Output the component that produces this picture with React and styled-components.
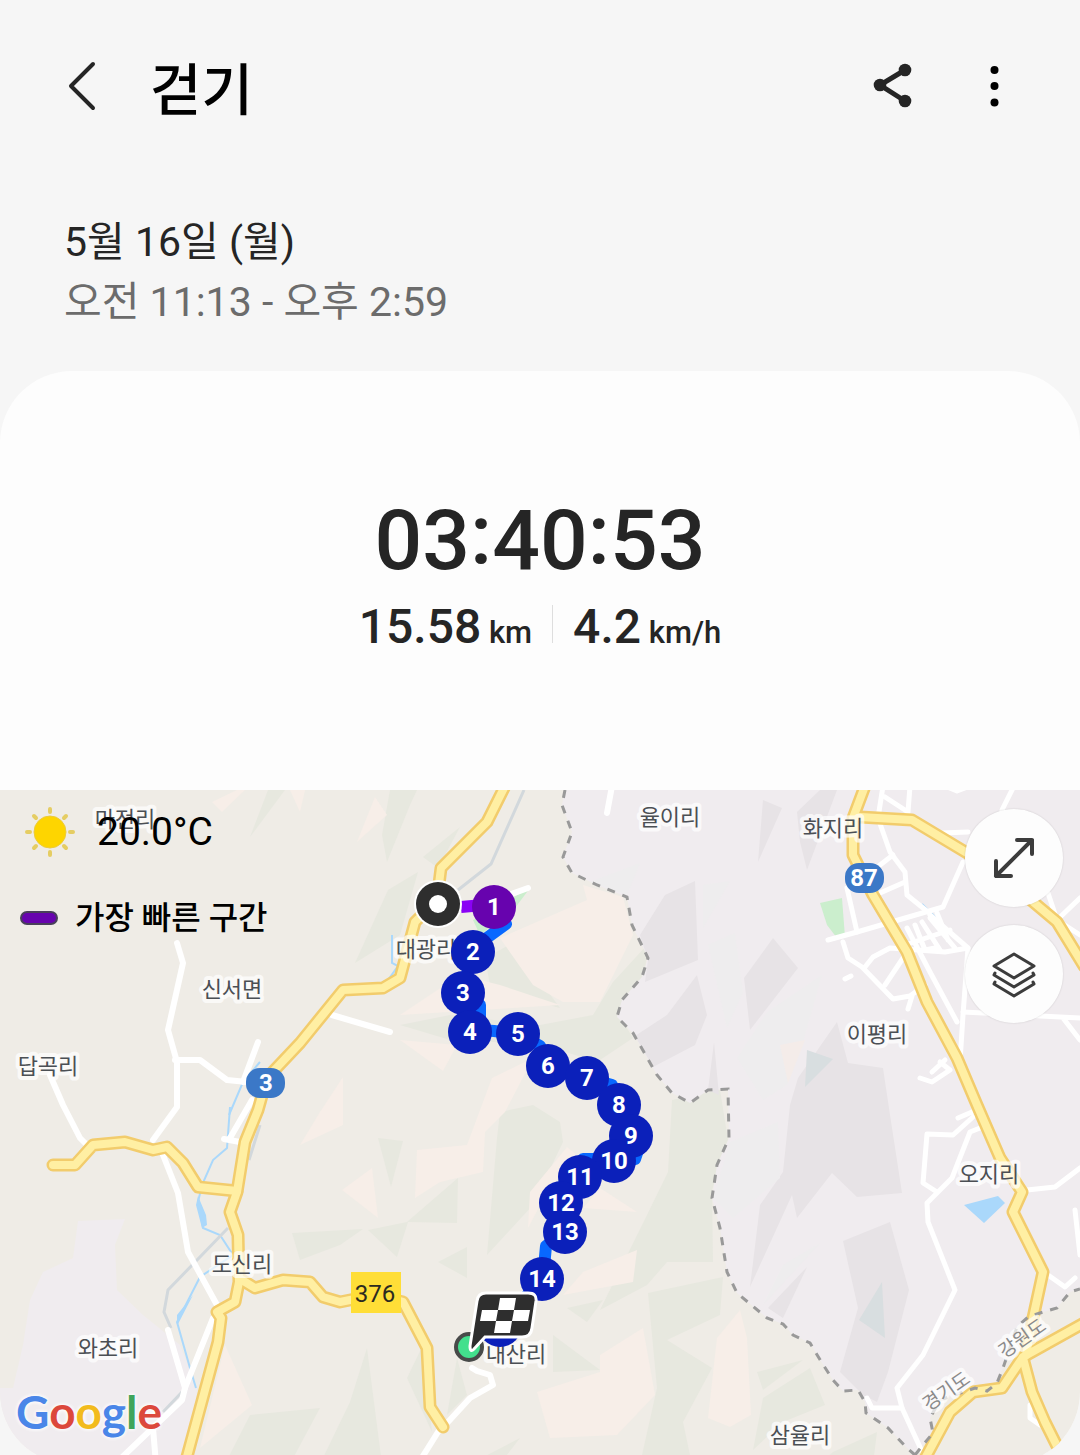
import React from 'react';
import styled, { createGlobalStyle } from 'styled-components';

const places = [
  { name: '마전리', x: 125, y: 827 },
  { name: '신서면', x: 232, y: 997 },
  { name: '답곡리', x: 48, y: 1074 },
  { name: '대광리', x: 426, y: 957 },
  { name: '율이리', x: 670, y: 825 },
  { name: '화지리', x: 833, y: 836 },
  { name: '이평리', x: 877, y: 1042 },
  { name: '오지리', x: 989, y: 1182 },
  { name: '도신리', x: 242, y: 1272 },
  { name: '와초리', x: 108, y: 1356 },
  { name: '내산리', x: 516, y: 1362 },
  { name: '삼율리', x: 800, y: 1443 },
];

const provinces = [
  { name: '강원도', x: 1022, y: 1338 },
  { name: '경기도', x: 946, y: 1391 },
];

const laps = [
  [494, 907], [473, 952], [463, 993], [470, 1032], [518, 1034],
  [548, 1066], [587, 1078], [619, 1105], [631, 1136], [614, 1161],
  [580, 1177], [561, 1203], [565, 1232], [542, 1279],
];

const hills = [
  '390,790 417,790 410,805 387,862 382,835',
  '460,827 438,868 423,857',
  '418,872 388,890 355,963 400,935',
  '485,958 513,943 560,1008 530,1000 490,985',
  '400,1025 450,1015 540,1025 593,1015 613,982 647,945 645,975 617,1012 633,1038 597,1062 553,1048 497,1042 457,1042',
  '378,1138 403,1141 391,1187',
  '292,1233 363,1229 340,1245 300,1260',
  '368,1230 407,1222 458,1178 457,1223 408,1222 397,1257',
  '467,1247 438,1262 467,1278',
  '500,1112 533,1105 560,1122 563,1142 533,1205 487,1255 497,1138',
  '567,1308 603,1300 587,1322',
  '672,1100 720,1090 728,1140 712,1190 713,1262 667,1262 647,1285 600,1310 647,1215 668,1172',
  '648,1293 723,1277 720,1315 667,1340 712,1368 683,1422 690,1455 640,1464 657,1388',
  '553,1335 600,1370 553,1372',
  '367,1348 382,1464 320,1464 350,1402',
  '407,1378 423,1345 432,1432',
  '457,1358 467,1395 447,1415',
  '757,1372 803,1360 763,1390',
  '763,1398 810,1368 825,1405 783,1422 753,1450',
  '833,1452 877,1432 873,1464 820,1464',
  '250,1415 300,1410 320,1408 290,1464 225,1464',
  '268,790 285,790 250,837',
  '520,1438 470,1464 500,1464',
];

const fields = [
  '375,797 387,815 357,842',
  '290,790 305,790 300,812',
  '237,790 245,790 222,812 212,802',
  '460,975 400,1015 480,1010 560,1005 500,985',
  '587,900 500,938 533,985 563,1002 600,1002 633,935 623,897 583,885',
  '400,1040 457,1045 443,1071',
  '343,1077 320,1112 300,1145 343,1125',
  '492,1078 533,1058 505,1112 485,1132 483,1172 440,1182 415,1198 417,1150 467,1145',
  '372,1168 342,1190 378,1218',
  '567,1147 577,1155 547,1192 528,1228 530,1192',
  '600,1188 637,1212 583,1208',
  '583,1272 637,1250 633,1282 563,1295',
  '740,1310 747,1338 751,1415 730,1427 708,1418 717,1338',
  '600,1355 643,1328 655,1395 617,1435 550,1438 537,1392 600,1372',
  '225,1345 252,1405 200,1448',
];

const ridges = [
  '763,800 782,808 758,862',
  '820,790 837,790 807,870 800,842 797,812',
  '695,881 665,895 640,935 648,960 645,982 698,960',
  '773,938 798,968 750,1030 744,978',
  '697,975 707,1015 695,1045 653,1067 635,1036 667,1015',
  '714,1042 719,1095 708,1090',
  '837,1022 848,1063 883,1068 890,1115 902,1193 857,1197 832,1173 797,1218 792,1195 750,1287 760,1205 783,1172 790,1105 798,1078',
  '890,1222 909,1290 888,1372 877,1402 863,1395 840,1372 858,1308 843,1241',
  '807,1267 783,1318 768,1308',
];

const plains = [
  '708,945 735,933 743,992 727,1028',
  '730,881 703,928 703,885',
  '822,975 803,1042 787,1085 763,1100 737,1058 767,1012',
  '778,1122 780,1178 733,1218 713,1198 730,1142',
  '820,1243 763,1305 783,1265',
  '640,863 627,895 590,882',
];

const westBorder =
  '565,790 562,805 572,832 563,857 572,873 597,885 627,897 632,925 648,958 642,977 622,1000 617,1017 633,1033 657,1075 672,1093 690,1103 708,1090 728,1089 729,1138 717,1165 712,1198 720,1228 727,1272 737,1293 767,1318 783,1324 793,1335 810,1343 822,1363 833,1380 843,1391 858,1390 865,1402 866,1413 888,1428 907,1448 915,1455';
const southBorder =
  '915,1455 923,1445 933,1433 930,1418 940,1400 975,1388 987,1391 997,1383 1003,1368 1017,1327 1028,1317 1040,1313 1057,1308 1070,1292 1080,1289';

const lanes = [
  'M177 943L183 963L168 1030L177 1062L177 1107L153 1140',
  'M175 1060H200L227 1080L247 1082',
  'M258 1042L243 1082L263 1075M252 1100L230 1138M224 1139L240 1142',
  'M50 1075L63 1105L80 1138L90 1148',
  'M163 1155L178 1193L188 1252L217 1305',
  'M213 1318L185 1388L182 1400L115 1464',
  'M168 1330L185 1388M153 1428L156 1464',
  'M332 1015L390 1032M612 786L607 813M495 900L528 888',
  'M472 1368L477 1371L490 1375L493 1385L470 1398L448 1422M438 1432L418 1464',
];

const streets = [
  'M883 786L878 818L890 852L905 872L907 895L928 912',
  'M885 797L908 812L910 786M945 786L957 791L970 786',
  'M942 833L968 832M1014 786L1002 810',
  'M963 862L943 907L857 932L828 940',
  'M847 888L857 932M880 865L893 855M880 893L905 882',
  'M930 915L968 948L963 1015L960 1062',
  'M968 948L945 952L890 948L873 957L865 967',
  'M843 942L848 958L862 967L893 999L910 996L925 985M912 996L908 1009',
  'M885 985L903 958M907 928L930 972L957 1022',
  'M915 925L925 950L935 948M922 922L940 950M930 918L955 948M937 913L948 940M905 945L950 930',
  'M963 1012L1080 1018M1063 1018L1080 1040',
  'M1048 893L1057 920M1057 920L1080 898M1057 920L1080 935M845 979L851 976',
  'M920 1078L932 1082L950 1070L940 1062M932 1072L945 1060',
  'M958 1118L972 1112M973 1117L953 1135L927 1134L923 1183L937 1192',
  'M980 1128L970 1132L952 1178L927 1203L928 1222L955 1290L923 1355L897 1388L902 1408L925 1458',
  'M902 1408H872L867 1398M1027 1190L1055 1187L1080 1168',
  'M1075 1210L1080 1255M1048 1275L1065 1287L1075 1278M1030 1405V1418L1040 1425',
];

const highways = [
  'M53 1165H75L93 1145L125 1142L153 1150L167 1147L183 1163L198 1187L237 1191',
  'M242 1280L255 1288L283 1280L310 1282L323 1297L340 1302L375 1295L403 1302L427 1348L430 1407L443 1427',
  'M505 786L487 822L441 868L437 900L415 922L400 978L383 988L343 990L300 1043L267 1078L258 1110L245 1142L237 1192L230 1212L238 1235L239 1282L235 1302L217 1312L221 1318L218 1342L185 1464',
  'M860 817L912 820L967 853L1013 885L1057 922L1084 966',
  'M865 786L853 818V855L873 895L907 952L927 1002L957 1058L977 1105L1000 1158L1022 1192L1013 1212L1043 1272L1033 1318L1026 1355',
  'M1023 1358L1032 1392L1045 1422L1066 1464',
  'M1084 1323L1023 1357L1002 1388L973 1392L950 1412L922 1464',
];

function Shapes({ list, fill }) {
  return list.map(points => <polygon key={points} points={points} fill={fill} />);
}

function Lines({ list, stroke, width }) {
  return (
    <g fill="none" stroke={stroke} strokeWidth={width} strokeLinecap="round" strokeLinejoin="round">
      {list.map(d => <path key={d} d={d} />)}
    </g>
  );
}

function RouteMap() {
  return (
    <MapCanvas viewBox="0 790 1080 674" role="img" aria-label="걷기 경로">
      <rect y="790" width="1080" height="674" fill="#efece6" />
      <Shapes list={hills} fill="#e7e8df" />
      <Shapes list={fields} fill="#f7eee8" />

      {/* urban areas */}
      <polygon
        points="78,1221 125,1219 115,1245 117,1290 143,1315 180,1345 197,1388 190,1464 0,1464 0,1388 13,1388 23,1345 30,1300 43,1272 73,1258"
        fill="#f0ecef"
      />
      <polygon points={`${westBorder} ${southBorder} 1080,790`} fill="#f0ecef" />
      <Shapes list={ridges} fill="#e7e3e6" />
      <Shapes list={plains} fill="#eeedee" />
      <polygon points="780,1045 805,1040 788,1083" fill="#f4ece9" />
      <polygon points="807,1050 833,1059 805,1087" fill="#d8dee0" />
      <polygon points="882,1282 885,1338 859,1320" fill="#d8dee0" />
      <polygon points="820,903 842,898 845,937 837,938 827,925" fill="#cbeecd" />
      <polygon points="473,920 530,888 515,908 480,935" fill="#cbeecd" />

      {/* water */}
      <g fill="none" stroke="#aad8fb" strokeWidth="2">
        <path d="M230 1107L227 1148L213 1160L202 1185L198 1202L203 1228L220 1235L233 1255L200 1277L177 1322L190 1368L196 1388" />
        <path d="M260 1062L243 1082L229 1115M922 904L963 945M392 935V963L398 966L388 980" />
      </g>
      <path d="M198 1196L206 1215L207 1225L202 1228L196 1205ZM193 1295L177 1315V1326Z" fill="#aad8fb" />
      <polygon points="964,1205 998,1196 1005,1203 984,1223" fill="#aad8fb" />
      <path
        d="M524 790L491 864L458 890M228 1228L168 1290L164 1312L171 1328M182 1392L163 1412M260 1125L249 1160"
        fill="none"
        stroke="#d2d8dc"
        strokeWidth="3"
      />

      <Lines list={lanes} stroke="#ffffff" width={6} />
      <Lines list={streets} stroke="#ffffff" width={5} />
      <Lines list={highways} stroke="#f2cc6c" width={13} />
      <Lines list={highways} stroke="#ffefa3" width={8} />
      <g fill="none" stroke="#999999" strokeWidth="3" strokeDasharray="8 8">
        <polyline points={westBorder} />
        <polyline points={southBorder} />
      </g>

      {places.map(({ name, x, y }) => (
        <PlaceName key={name} x={x} y={y}>{name}</PlaceName>
      ))}
      {provinces.map(({ name, x, y }) => (
        <ProvinceName key={name} transform={`translate(${x} ${y}) rotate(-35)`} y="7">{name}</ProvinceName>
      ))}

      <rect x="246" y="1068" width="39" height="30" rx="14" fill="#3b78c7" />
      <Shield x="266" y="1091">3</Shield>
      <rect x="845" y="863" width="39" height="30" rx="14" fill="#3b78c7" />
      <Shield x="864" y="886">87</Shield>
      <rect x="351" y="1272" width="50" height="41" fill="#ffde37" />
      <RoadNumber x="375" y="1302">376</RoadNumber>

      {/* walked route */}
      <g fill="none" strokeWidth="12" strokeLinejoin="round">
        <path
          d="M494 907L506 924L473 948L463 993L480 1005V1030L494 1031L518 1034L540 1046L552 1066L587 1078L612 1085L619 1105L626 1125L638 1150L635 1159L614 1162L600 1159H583L561 1190V1203L565 1232L546 1246L543 1278L500 1325"
          stroke="#0868ff"
        />
        <path d="M461 907L494 904" stroke="#8a02f5" />
      </g>
      <circle cx="438" cy="904" r="24" fill="#ffffff" />
      <circle cx="438" cy="904" r="22" fill="#2e2e2e" />
      <circle cx="438" cy="904" r="9" fill="#ffffff" />
      <circle cx="500" cy="1325" r="22" fill="#0b20ba" />
      {laps.map(([x, y], i) => (
        <circle key={i} cx={x} cy={y} r="22" fill={i === 0 ? '#6703ae' : '#0b20ba'} />
      ))}
      {laps.map(([x, y], i) => (
        <LapNumber key={i} x={x} y={y + 8}>{i + 1}</LapNumber>
      ))}

      {/* finish flag */}
      <circle cx="469" cy="1347" r="13" fill="#43e08d" stroke="#484a49" strokeWidth="4" />
      <path
        d="M486 1293H528Q537 1293 536 1301L532 1328Q531 1337 522 1337H485L474 1349Q470 1353 470 1346L477 1301Q478 1293 486 1293Z"
        fill="#2e2e2e"
        stroke="#ffffff"
        strokeWidth="3"
      />
      <path
        d="M500 1298H516L514 1310H498ZM482 1310H498L496 1321H480ZM514 1310H530L528 1321H512ZM496 1321H512L510 1333H494Z"
        fill="#ffffff"
      />
    </MapCanvas>
  );
}

function SunIcon() {
  return (
    <svg width="50" height="50" viewBox="0 0 50 50" aria-hidden="true">
      <circle cx="25" cy="25" r="16" fill="#fed500" stroke="#eccb3c" />
      <path
        d="M25 2V5M25 45V48M2 25H5M45 25H48M9 9L11 11M39 39L41 41M9 41L11 39M39 11L41 9"
        stroke="#e5cd63"
        strokeWidth="4"
        strokeLinecap="round"
      />
    </svg>
  );
}

export default function App() {
  return (
    <Screen>
      <GlobalStyle />
      <TopBar>
        <IconButton type="button" aria-label="뒤로">
          <svg width="48" height="52" viewBox="0 0 48 52">
            <path d="M35 4L13 26L35 48" fill="none" stroke="#252525" strokeWidth="4" strokeLinecap="round" strokeLinejoin="round" />
          </svg>
        </IconButton>
        <Title>걷기</Title>
        <Actions>
          <IconButton type="button" aria-label="공유">
            <svg width="48" height="52" viewBox="0 0 48 52">
              <path d="M36 10L11 25L36 41" fill="none" stroke="#252525" strokeWidth="5" />
              <g fill="#252525">
                <circle cx="36" cy="10" r="6.3" />
                <circle cx="11" cy="25" r="6.3" />
                <circle cx="36" cy="41" r="6.3" />
              </g>
            </svg>
          </IconButton>
          <IconButton type="button" aria-label="더보기">
            <svg width="48" height="52" viewBox="0 0 48 52">
              <circle cx="24.5" cy="10" r="4" />
              <circle cx="24.5" cy="26" r="4" />
              <circle cx="24.5" cy="42.5" r="4" />
            </svg>
          </IconButton>
        </Actions>
      </TopBar>

      <Period>
        <DateLine>5월 16일 (월)</DateLine>
        <DateLine $muted>오전 11:13 - 오후 2:59</DateLine>
      </Period>

      <Card>
        <Summary>
          <Duration>
            03<Colon>:</Colon>40<Colon>:</Colon>53
          </Duration>
          <Stats>
            <Stat>15.58<Unit> km</Unit></Stat>
            <Divider />
            <Stat>4.2<Unit> km/h</Unit></Stat>
          </Stats>
        </Summary>

        <MapPanel>
          <RouteMap />
          <Legend>
            <Weather>
              <SunIcon />
              <span>20.0°C</span>
            </Weather>
            <Fastest>
              <Swatch />
              <span>가장 빠른 구간</span>
            </Fastest>
          </Legend>
          <MapControls>
            <RoundButton type="button" aria-label="지도 확대">
              <svg width="48" height="48" viewBox="0 0 48 48">
                <path d="M6 42L42 6M27 6H42V20M6 27V42H21" />
              </svg>
            </RoundButton>
            <RoundButton type="button" aria-label="지도 유형">
              <svg width="48" height="48" viewBox="0 0 48 48">
                <path d="M24 4L44 16L24 28L4 16ZM5 23L4 25L24 37L44 25L43 23M5 32L4 34L24 46L44 34L43 32" strokeWidth="3" />
              </svg>
            </RoundButton>
          </MapControls>
          <GoogleLogo href="https://maps.google.com" aria-label="Google">
            <Letter $color="#4a86e8">G</Letter>
            <Letter $color="#dc483c">o</Letter>
            <Letter $color="#f2bb1d">o</Letter>
            <Letter $color="#4a86e8">g</Letter>
            <Letter $color="#3fa45b">l</Letter>
            <Letter $color="#dc483c">e</Letter>
          </GoogleLogo>
        </MapPanel>
      </Card>
    </Screen>
  );
}

/** Styled components */
const GlobalStyle = createGlobalStyle`
  * {
    box-sizing: border-box;
  }

  body {
    margin: 0;
    background: #f6f6f6;
    font-family: Roboto, "Noto Sans CJK KR", sans-serif;
    color: #252525;
  }
`;

const Screen = styled.main`
  height: 100vh;
  overflow-y: auto;
  scrollbar-width: none;
`;

const TopBar = styled.header`
  display: flex;
  align-items: center;
  padding: 48px 62px 0 58px;
`;

const IconButton = styled.button`
  display: flex;
  padding: 0;
  border: none;
  background: transparent;
  cursor: pointer;
`;

const Title = styled.h1`
  flex: 1;
  margin: 0 0 0 44px;
  padding-top: 10px;
  font-size: 56px;
  line-height: 66px;
  font-weight: 500;
  color: #000;
`;

const Actions = styled.div`
  display: flex;
  gap: 53px;
`;

const Period = styled.section`
  padding: 88px 64px 39px;
`;

const DateLine = styled.p`
  margin: 0;
  font-size: 41px;
  line-height: 60px;
  color: ${({ $muted }) => ($muted ? '#6c6c6c' : '#252525')};
`;

const Card = styled.section`
  overflow: hidden;
  border-radius: 72px;
  background: #fdfdfd;
`;

const Summary = styled.div`
  display: flex;
  flex-direction: column;
  align-items: center;
  padding: 120px 24px 127px;
  font-weight: 500;
`;

const Duration = styled.div`
  height: 100px;
  font-size: 84px;
  line-height: 100px;
`;

const Colon = styled.span`
  line-height: 1;
  vertical-align: 5px;
`;

const Stats = styled.div`
  display: flex;
  align-items: center;
  gap: 20px;
  margin-top: 6px;
`;

const Stat = styled.div`
  font-size: 48px;
  line-height: 60px;
`;

const Unit = styled.span`
  font-size: 31px;
`;

const Divider = styled.span`
  width: 1px;
  height: 38px;
  margin-bottom: 12px;
  background: #dedede;
`;

const MapPanel = styled.div`
  position: relative;
`;

const MapCanvas = styled.svg`
  display: block;
  width: 100%;
  height: auto;
`;

const PlaceName = styled.text`
  font-size: 22px;
  fill: #4b4f54;
  text-anchor: middle;
  paint-order: stroke;
  stroke: rgba(255, 255, 255, 0.7);
  stroke-width: 8px;
  stroke-linejoin: round;
`;

const ProvinceName = styled(PlaceName)`
  font-size: 19px;
  fill: #8a8a8a;
`;

const Shield = styled.text`
  font-size: 24px;
  font-weight: 700;
  fill: #fff;
  text-anchor: middle;
`;

const LapNumber = styled(Shield)``;

const RoadNumber = styled(Shield)`
  font-weight: 400;
  fill: #2c2a20;
`;

const Legend = styled.div`
  position: absolute;
  top: 12px;
  left: 20px;
  color: #000;
`;

const Weather = styled.div`
  display: flex;
  align-items: center;
  gap: 22px;
  margin-left: 5px;
  font-size: 39px;
  line-height: 60px;
`;

const Fastest = styled.div`
  display: flex;
  align-items: center;
  gap: 17px;
  margin-top: 32px;
  font-size: 32px;
  line-height: 48px;
  font-weight: 500;
`;

const Swatch = styled.span`
  width: 38px;
  height: 14px;
  border: 2px solid #49405a;
  border-radius: 7px;
  background: #6703ae;
`;

const MapControls = styled.div`
  position: absolute;
  top: 19px;
  right: 17px;
  display: grid;
  gap: 18px;
`;

const RoundButton = styled.button`
  display: flex;
  align-items: center;
  justify-content: center;
  width: 98px;
  height: 98px;
  padding: 0;
  border: none;
  border-radius: 50%;
  background: #fdfdfd;
  box-shadow: 0 0 2px rgba(0, 0, 0, 0.15);
  cursor: pointer;

  svg {
    fill: none;
    stroke: #3c3c3c;
    stroke-width: 4;
    stroke-linecap: round;
    stroke-linejoin: round;
  }
`;

const GoogleLogo = styled.a`
  position: absolute;
  left: 16px;
  bottom: 22px;
  font-family: Lato, sans-serif;
  font-size: 46px;
  line-height: 60px;
  font-weight: 700;
  text-decoration: none;
  text-shadow: 0 0 4px #fff, 0 0 4px #fff;
`;

const Letter = styled.span`
  color: ${({ $color }) => $color};
`;
